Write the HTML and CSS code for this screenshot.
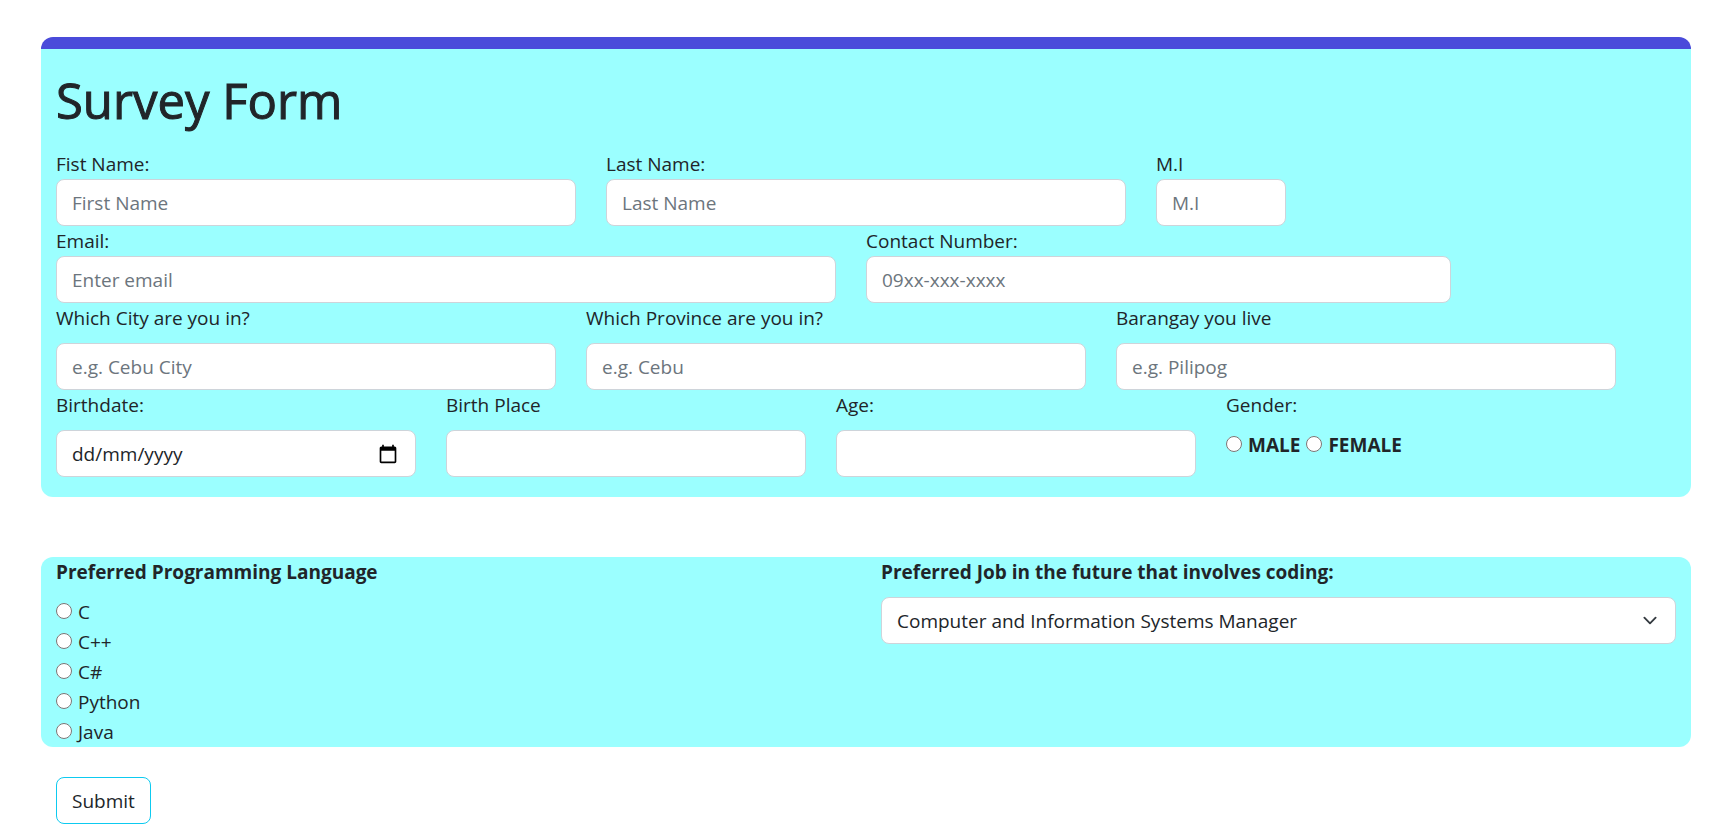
FILE: index.html
```html
<!DOCTYPE html>
<html lang="en-GB">
<head>
<meta charset="utf-8">
<meta name="viewport" content="width=device-width, initial-scale=1">
<title>Survey Form</title>
<link rel="stylesheet" href="styles.css">
</head>
<body>
<form class="survey">
  <section class="card card-personal">
    <h1 class="title">Survey Form</h1>
    <div class="row row-name">
      <div class="field"><label for="first">Fist Name:</label><input class="control" id="first" type="text" placeholder="First Name"></div>
      <div class="field"><label for="last">Last Name:</label><input class="control" id="last" type="text" placeholder="Last Name"></div>
      <div class="field"><label for="mi">M.I</label><input class="control" id="mi" type="text" placeholder="M.I"></div>
    </div>
    <div class="row row-contact">
      <div class="field"><label for="email">Email:</label><input class="control" id="email" type="email" placeholder="Enter email"></div>
      <div class="field"><label for="phone">Contact Number:</label><input class="control" id="phone" type="tel" placeholder="09xx-xxx-xxxx"></div>
    </div>
    <div class="row row-address">
      <div class="field spaced"><label for="city">Which City are you in?</label><input class="control" id="city" type="text" placeholder="e.g. Cebu City"></div>
      <div class="field spaced"><label for="province">Which Province are you in?</label><input class="control" id="province" type="text" placeholder="e.g. Cebu"></div>
      <div class="field spaced"><label for="barangay">Barangay you live</label><input class="control" id="barangay" type="text" placeholder="e.g. Pilipog"></div>
    </div>
    <div class="row row-birth">
      <div class="field spaced">
        <label for="birthdate">Birthdate:</label>
        <div class="date">
          <input class="control date-input" id="birthdate" type="text" inputmode="numeric" placeholder="dd/mm/yyyy">
          <button class="date-button" type="button" aria-label="Show date picker">
            <svg class="date-icon" viewBox="0 0 24 24" aria-hidden="true"><path d="M20 3h-1V1h-2v2H7V1H5v2H4c-1.1 0-2 .9-2 2v16c0 1.1.9 2 2 2h16c1.1 0 2-.9 2-2V5c0-1.1-.9-2-2-2zm0 18H4V8h16v13z"/></svg>
          </button>
        </div>
      </div>
      <div class="field spaced"><label for="birthplace">Birth Place</label><input class="control" id="birthplace" type="text"></div>
      <div class="field spaced"><label for="age">Age:</label><input class="control" id="age" type="text"></div>
      <div class="field spaced" role="radiogroup" aria-labelledby="gender-label">
        <span id="gender-label">Gender:</span>
        <div class="genders">
          <label class="choice strong"><input class="radio" type="radio" name="gender">MALE</label>
          <label class="choice strong"><input class="radio" type="radio" name="gender">FEMALE</label>
        </div>
      </div>
    </div>
  </section>

  <section class="card card-work">
    <div class="field spaced" role="radiogroup" aria-labelledby="language-label">
      <span class="strong" id="language-label">Preferred Programming Language</span>
      <div class="languages">
        <label class="choice"><input class="radio" type="radio" name="language">C</label>
        <label class="choice"><input class="radio" type="radio" name="language">C++</label>
        <label class="choice"><input class="radio" type="radio" name="language">C#</label>
        <label class="choice"><input class="radio" type="radio" name="language">Python</label>
        <label class="choice"><input class="radio" type="radio" name="language">Java</label>
      </div>
    </div>
    <div class="field spaced">
      <label class="strong" for="job">Preferred Job in the future that involves coding:</label>
      <select class="control select" id="job"><option>Computer and Information Systems Manager</option></select>
    </div>
  </section>

  <button class="submit" type="submit">Submit</button>
</form>
</body>
</html>
```
FILE: styles.css
```css
*, *::before, *::after {
  box-sizing: border-box;
}

body {
  margin: 0;
  background: #fff;
  color: #212529;
  font-family: "Segoe UI", "Open Sans", "Noto Sans", sans-serif;
  font-size: 19px;
  line-height: 30px;
}

.survey {
  padding: 37px 32px 6px 41px;
}

.card {
  padding: 0 15px;
  border-radius: 12px;
  background: #9bffff;
}

.card-personal {
  padding-top: 20px;
  padding-bottom: 20px;
  border-top: 12px solid #4a4bda;
}

.title {
  margin: 0 0 18px;
  font-size: 49px;
  font-weight: 500;
  line-height: 62px;
  -webkit-text-stroke: 1px currentColor;
}

.row {
  display: grid;
  column-gap: 30px;
}

.row-name { grid-template-columns: 52fr 52fr 13fr 36fr; }
.row-contact { grid-template-columns: 4fr 3fr 1fr; }
.row-address { grid-template-columns: 50fr 50fr 50fr 3fr; }
.row-birth { grid-template-columns: 6fr 6fr 6fr 6fr 1fr; }

.field {
  display: flex;
  flex-direction: column;
  min-width: 0;
}

.spaced {
  gap: 10px;
}

.control {
  display: block;
  width: 100%;
  height: 47px;
  margin: 0;
  padding: 7px 15px;
  border: 1px solid #ced4da;
  border-radius: 8px;
  background-color: #fff;
  color: #212529;
  font: inherit;
  appearance: none;
}

.control::placeholder {
  color: #6c757d;
  opacity: 1;
}

.date {
  position: relative;
}

.date-input {
  padding-right: 45px;
}

.date-input::placeholder {
  color: #212529;
}

.date-button {
  position: absolute;
  top: 0;
  right: 18px;
  bottom: 0;
  display: flex;
  align-items: center;
  padding: 0;
  border: 0;
  background: none;
  color: #000;
}

.date-icon {
  width: 20px;
  height: 20px;
  fill: currentColor;
}

.select {
  padding-right: 45px;
  background-image: url("data:image/svg+xml,%3Csvg xmlns='http://www.w3.org/2000/svg' viewBox='0 0 16 16'%3E%3Cpath fill='none' stroke='%23343a40' stroke-linecap='round' stroke-linejoin='round' stroke-width='2' d='m2 5 6 6 6-6'/%3E%3C/svg%3E");
  background-position: right 15px center;
  background-repeat: no-repeat;
  background-size: 20px 15px;
}

.choice {
  display: flex;
  align-items: center;
  gap: 6px;
}

.radio {
  width: 16px;
  height: 16px;
  margin: 0 0 2px;
}

.strong {
  font-weight: 700;
}

.genders {
  display: flex;
  gap: 6px;
}

.card-work {
  display: grid;
  grid-template-columns: 1fr 1fr;
  column-gap: 30px;
  margin-top: 60px;
}

.submit {
  display: block;
  height: 47px;
  margin: 30px 15px 0;
  padding: 7px 15px;
  border: 1px solid #0dcaf0;
  border-radius: 8px;
  background: #fff;
  color: #212529;
  font: inherit;
}
```
